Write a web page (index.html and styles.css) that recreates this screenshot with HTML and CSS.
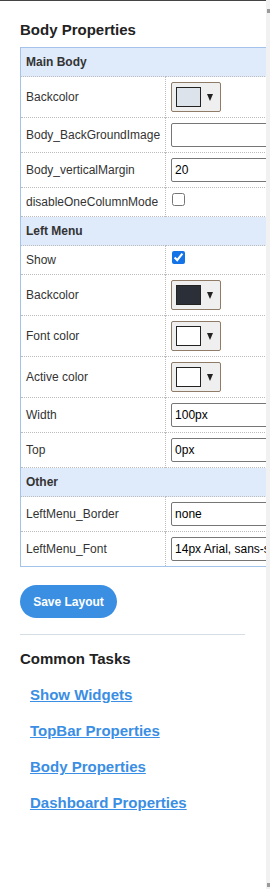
FILE: index.html
```html
<!DOCTYPE html>
<html>
<head>
<meta charset="utf-8">
<link rel="stylesheet" href="styles.css">
</head>
<body>
<div class="page">
  <div class="main">
    <div class="panel">
      <h2 class="title">Body Properties</h2>
      <table class="props">
        <tr class="group"><td colspan="2">Main Body</td></tr>
        <tr>
          <td class="label">Backcolor</td>
          <td class="value"><button class="color-btn"><span class="swatch swatch-light"></span><span class="arrow"></span></button></td>
        </tr>
        <tr>
          <td class="label">Body_BackGroundImage</td>
          <td class="value"><input class="text-input" type="text" value=""></td>
        </tr>
        <tr>
          <td class="label">Body_verticalMargin</td>
          <td class="value"><input class="text-input" type="text" value="20"></td>
        </tr>
        <tr>
          <td class="label">disableOneColumnMode</td>
          <td class="value"><input class="check" type="checkbox"></td>
        </tr>
        <tr class="group"><td colspan="2">Left Menu</td></tr>
        <tr>
          <td class="label">Show</td>
          <td class="value"><input class="check" type="checkbox" checked></td>
        </tr>
        <tr>
          <td class="label">Backcolor</td>
          <td class="value"><button class="color-btn"><span class="swatch swatch-dark"></span><span class="arrow"></span></button></td>
        </tr>
        <tr>
          <td class="label">Font color</td>
          <td class="value"><button class="color-btn"><span class="swatch swatch-white"></span><span class="arrow"></span></button></td>
        </tr>
        <tr>
          <td class="label">Active color</td>
          <td class="value"><button class="color-btn"><span class="swatch swatch-white"></span><span class="arrow"></span></button></td>
        </tr>
        <tr>
          <td class="label">Width</td>
          <td class="value"><input class="text-input" type="text" value="100px"></td>
        </tr>
        <tr>
          <td class="label">Top</td>
          <td class="value"><input class="text-input" type="text" value="0px"></td>
        </tr>
        <tr class="group"><td colspan="2">Other</td></tr>
        <tr>
          <td class="label">LeftMenu_Border</td>
          <td class="value"><input class="text-input" type="text" value="none"></td>
        </tr>
        <tr>
          <td class="label">LeftMenu_Font</td>
          <td class="value"><input class="text-input" type="text" value="14px Arial, sans-serif"></td>
        </tr>
      </table>
      <button class="save">Save Layout</button>
      <hr class="divider">
      <h2 class="tasks-title">Common Tasks</h2>
      <ul class="tasks">
        <li><a href="#">Show Widgets</a></li>
        <li><a href="#">TopBar Properties</a></li>
        <li><a href="#">Body Properties</a></li>
        <li><a href="#">Dashboard Properties</a></li>
      </ul>
    </div>
  </div>
  <div class="scrollbar"><span class="sb-mark"></span><span class="sb-mark"></span></div>
</div>
</body>
</html>
```

FILE: styles.css
```css
html, body {
  margin: 0;
  padding: 0;
  background: #fff;
}
body {
  font-family: "Liberation Sans", Arial, sans-serif;
}
.page {
  display: flex;
  height: 889px;
  overflow: hidden;
}
.main {
  width: 266px;
  flex: none;
  overflow: hidden;
  border-top: 1px solid #444;
  box-sizing: border-box;
}
.panel {
  padding: 20px 21px 0 20px;
}
.title {
  font-size: 15px;
  line-height: 17px;
  font-weight: bold;
  color: #222;
  margin: 0 0 9px;
}
.props {
  border-collapse: collapse;
  width: 320px;
  border: 1px solid #a3c3ea;
  font-size: 12px;
  color: #333;
}
.props td {
  padding: 5px;
  line-height: 18px;
  border-top: 1px dotted #bdbdbd;
  vertical-align: middle;
}
.props .label {
  width: 134px;
  border-right: 1px dotted #bdbdbd;
  white-space: nowrap;
}
.props .group td {
  background: #dfeafb;
  font-weight: bold;
}
.color-btn {
  display: flex;
  align-items: center;
  width: 50px;
  height: 30px;
  box-sizing: border-box;
  border: 1px solid #8f7b66;
  border-radius: 2px;
  background: #efefef;
  padding: 0 0 0 4px;
  margin: 0;
}
.swatch {
  width: 25px;
  height: 20px;
  box-sizing: border-box;
  border: 1px solid #222;
  margin-right: 6px;
}
.swatch-light { background: #dce3ea; }
.swatch-dark { background: #2b3038; }
.swatch-white { background: #fff; }
.arrow {
  width: 0;
  height: 0;
  border-left: 3.5px solid transparent;
  border-right: 3.5px solid transparent;
  border-top: 7px solid #222;
}
.text-input {
  display: block;
  width: 160px;
  height: 24px;
  box-sizing: border-box;
  border: 1px solid #767676;
  border-radius: 2px;
  padding: 1px 3px;
  margin: 0;
  font: 12px "Liberation Sans", Arial, sans-serif;
  color: #000;
  background: #fff;
}
.check {
  width: 13px;
  height: 13px;
  margin: 0 0 0 1px;
  vertical-align: top;
  accent-color: #1473e6;
}
.save {
  display: block;
  margin: 18px 0 0;
  width: 97px;
  height: 33px;
  border: none;
  border-radius: 17px;
  background: #3a8fe3;
  color: #fff;
  font: bold 12px "Liberation Sans", Arial, sans-serif;
  padding: 0;
}
.divider {
  margin: 16px 0 0;
  border: none;
  border-top: 1px solid #d5dde5;
  height: 0;
}
.tasks-title {
  margin: 15px 0 0;
  font-size: 15px;
  line-height: 17px;
  font-weight: bold;
  color: #222;
}
.tasks {
  list-style: none;
  margin: 10px 0 0;
  padding: 0 0 0 10px;
}
.tasks li {
  line-height: 36px;
}
.tasks a {
  color: #3a8ee4;
  font-size: 15px;
  font-weight: bold;
  text-decoration: underline;
}
.scrollbar {
  width: 4px;
  flex: none;
  background: #f1f1f1;
  display: flex;
  flex-direction: column;
  justify-content: space-between;
  align-items: flex-end;
  padding: 9px 0 2px;
  box-sizing: border-box;
}
.sb-mark {
  width: 3px;
  height: 4px;
  background: #9a9a9a;
}
```
